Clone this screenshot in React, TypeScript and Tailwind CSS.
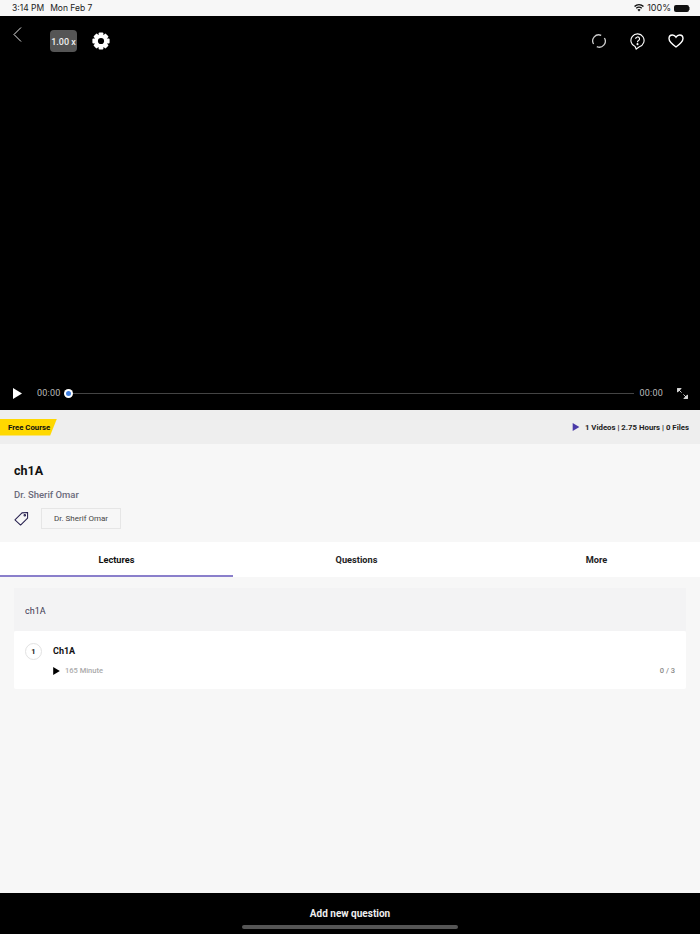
const font = { fontFamily: 'Roboto, sans-serif' };

function Play({ className }: { className: string }) {
  return (
    <svg viewBox="0 0 10 12" className={className} fill="currentColor">
      <path d="M0 0 L10 6 L0 12 Z" />
    </svg>
  );
}

function Gear() {
  const teeth = [0, 45, 90, 135];
  return (
    <svg viewBox="0 0 18 18" className="ml-[15px] mt-[6px] w-[18px] h-[18px]">
      {teeth.map((deg) => (
        <rect key={deg} x="6.6" y="0.4" width="4.8" height="17.2" rx="1" fill="#fff" transform={`rotate(${deg} 9 9)`} />
      ))}
      <circle cx="9" cy="9" r="6.6" fill="#fff" />
      <circle cx="9" cy="9" r="3.1" fill="#000" />
    </svg>
  );
}

function StatusBar() {
  return (
    <div className="h-[16px] bg-[#f7f7f7] flex items-center justify-between pl-[12px] pr-[10px] text-[8.5px] text-[#222] font-['Inter',sans-serif]">
      <div className="flex gap-[6px]">
        <span>3:14 PM</span>
        <span>Mon Feb 7</span>
      </div>
      <div className="flex items-center gap-[3px]">
        <svg viewBox="0 0 14 10" className="w-[10px] h-[8px]" fill="#111">
          <path d="M7 10 L4.8 7.4 A3.4 3.4 0 0 1 9.2 7.4 Z" />
          <path d="M3.7 6.2 L2.5 4.8 A6.8 6.8 0 0 1 11.5 4.8 L10.3 6.2 A5 5 0 0 0 3.7 6.2 Z" />
          <path d="M1.5 3.7 L0 2.2 A10.4 10.4 0 0 1 14 2.2 L12.5 3.7 A8.4 8.4 0 0 0 1.5 3.7 Z" />
        </svg>
        <span className="text-[9px]">100%</span>
        <div className="flex items-center">
          <div className="w-[15px] h-[7px] rounded-[2px] bg-[#111]" />
          <div className="w-[1px] h-[3px] bg-[#888]" />
        </div>
      </div>
    </div>
  );
}

function VideoPlayer() {
  return (
    <div className="h-[394px] bg-black flex flex-col justify-between text-white">
      <div className="flex justify-between pt-[10px] pl-[13px] pr-[16px]">
        <div className="flex items-start">
          <svg viewBox="0 0 9 15" className="w-[9px] h-[15px] mt-[1px]" fill="none" stroke="#fff" strokeWidth="0.9">
            <path d="M8 0.5 L1 7.5 L8 14.5" />
          </svg>
          <div className="ml-[28px] mt-[4px] pt-[3px] w-[27px] h-[22px] rounded-[4px] bg-[#555] flex items-center justify-center text-[9px] font-medium text-[#eee]">
            1.00 x
          </div>
          <Gear />
        </div>
        <div className="flex items-center gap-[23px] mt-[4px]">
          <svg viewBox="0 0 14 14" className="w-[14px] h-[14px] mr-[1px]" fill="none" stroke="#ccc" strokeWidth="1.3">
            <path d="M1.6 10 A6 6 0 0 1 9.2 1.4" />
            <path d="M12.4 4 A6 6 0 0 1 4.8 12.6" />
          </svg>
          <svg viewBox="0 0 16 18" className="w-[15px] h-[17px]" fill="none" stroke="#fff" strokeWidth="1.2">
            <path d="M5.4 14.4 A7 7 0 1 1 10 14.6 C8.8 15.4 7.8 16 6.6 17 Z" />
            <path d="M6 6.2 A2.1 2.1 0 1 1 8.8 8.2 C8.2 8.5 8 8.9 8 9.8" />
            <circle cx="8" cy="11.8" r="0.5" fill="#fff" />
          </svg>
          <svg viewBox="0 0 16 14" className="w-[16px] h-[14px]" fill="none" stroke="#fff" strokeWidth="1.4">
            <path d="M8 13 C3 9.5 1 7.4 1 4.6 C1 2.5 2.6 1 4.4 1 C5.9 1 7.2 1.8 8 3.2 C8.8 1.8 10.1 1 11.6 1 C13.4 1 15 2.5 15 4.6 C15 7.4 13 9.5 8 13 Z" />
          </svg>
        </div>
      </div>
      <div className="flex items-center h-[34px] pl-[13px] pr-[12px]">
        <Play className="w-[9px] h-[11px]" />
        <span className="ml-[15px] mt-[1px] text-[9px] text-[#bbb] tracking-[0.2px]">00:00</span>
        <div className="ml-[4px] w-[9px] h-[9px] rounded-full bg-white flex items-center justify-center shrink-0">
          <div className="w-[5px] h-[5px] rounded-full bg-[#3f7fe0]" />
        </div>
        <div className="flex-1 h-[1px] bg-[#444]" />
        <span className="ml-[6px] mt-[1px] text-[9px] text-[#bbb] tracking-[0.2px]">00:00</span>
        <svg viewBox="0 0 12 12" className="ml-[14px] w-[11px] h-[11px]" fill="#ddd" stroke="#ddd">
          <path d="M0.5 0.5 L4.5 0.5 L0.5 4.5 Z M0.5 0.5 L5 5 M11.5 11.5 L7.5 11.5 L11.5 7.5 Z M11.5 11.5 L7 7" strokeWidth="1" />
        </svg>
      </div>
    </div>
  );
}

function CourseStrip() {
  return (
    <div className="h-[34px] bg-[#eeeeee] flex items-center justify-between pr-[11px]">
      <div className="h-[17px] w-[57px] pt-[1px] bg-[#ffd800] [clip-path:polygon(0_0,100%_0,88%_100%,0_100%)] flex items-center pl-[8px] text-[7.8px] font-bold text-[#111]">
        Free Course
      </div>
      <div className="flex items-center gap-[5px] text-[7.8px] font-bold text-[#222]">
        <Play className="w-[8px] h-[8px] text-[#4a3aa8]" />
        <span className="mt-[1px]">1 Videos | 2.75 Hours | 0 Files</span>
      </div>
    </div>
  );
}

function CourseInfo() {
  return (
    <div className="h-[98px] px-[14px] pt-[19px]">
      <div className="text-[12.5px] leading-[15px] font-bold text-[#111]">ch1A</div>
      <div className="mt-[11px] text-[9.5px] leading-[12px] font-medium text-[#6b6b7b]">Dr. Sherif Omar</div>
      <div className="mt-[7px] flex items-center">
        <svg viewBox="0 0 16 16" className="w-[15px] h-[15px]" fill="none" stroke="#27204f" strokeWidth="1.1" strokeLinejoin="round">
          <path d="M1 9.5 L8.5 2 L14.5 1.5 L14.5 7.5 L7 15 Z" />
          <circle cx="11.5" cy="4.5" r="0.8" />
        </svg>
        <div className="ml-[12px] w-[80px] h-[21px] border border-[#e6e6e6] flex items-center justify-center text-[8px] text-[#444]">
          Dr. Sherif Omar
        </div>
      </div>
    </div>
  );
}

function Tabs() {
  return (
    <div className="h-[35px] bg-white flex text-[9.2px] font-bold text-[#222]">
      <div className="w-[233px] pt-[3px] border-b-2 border-[#8a7fcb] flex items-center justify-center text-[#111]">Lectures</div>
      <div className="w-[247px] pt-[1px] flex items-center justify-center">Questions</div>
      <div className="flex-1 pt-[1px] pl-[13px] flex items-center justify-center">More</div>
    </div>
  );
}

function LectureList() {
  return (
    <div className="flex-1 px-[14px] pt-[11px]">
      <div className="h-[43px] pt-[4px] bg-[#f3f3f4] pl-[11px] flex items-center text-[9px] text-[#3a3550]">ch1A</div>
      <div className="h-[58px] bg-white rounded-[2px] pl-[11px] pr-[11px] pt-[12px]">
        <div className="flex items-center">
          <div className="w-[17px] h-[17px] rounded-full border border-[#e2e2e2] flex items-center justify-center text-[7.5px] font-bold text-[#222]">
            1
          </div>
          <span className="ml-[11px] mt-[1px] text-[9px] font-bold text-[#111]">Ch1A</span>
        </div>
        <div className="mt-[5px] flex items-center justify-between">
          <div className="flex items-center ml-[28px]">
            <Play className="w-[7px] h-[8px] text-black" />
            <span className="ml-[5px] text-[7.5px] font-medium text-[#aaa]">165 Minute</span>
          </div>
          <span className="text-[7.5px] font-medium text-[#888]">0 / 3</span>
        </div>
      </div>
    </div>
  );
}

export default function App() {
  return (
    <div style={font} className="relative w-[700px] h-[934px] bg-[#f7f7f7] flex flex-col overflow-hidden">
      <StatusBar />
      <VideoPlayer />
      <CourseStrip />
      <CourseInfo />
      <Tabs />
      <LectureList />
      <div className="h-[41px] bg-black flex justify-center pt-[13px] text-[10px] font-bold text-[#eee]">Add new question</div>
      <div className="absolute left-[242px] bottom-[5px] w-[216px] h-[4px] rounded-full bg-[#555]" />
    </div>
  );
}
